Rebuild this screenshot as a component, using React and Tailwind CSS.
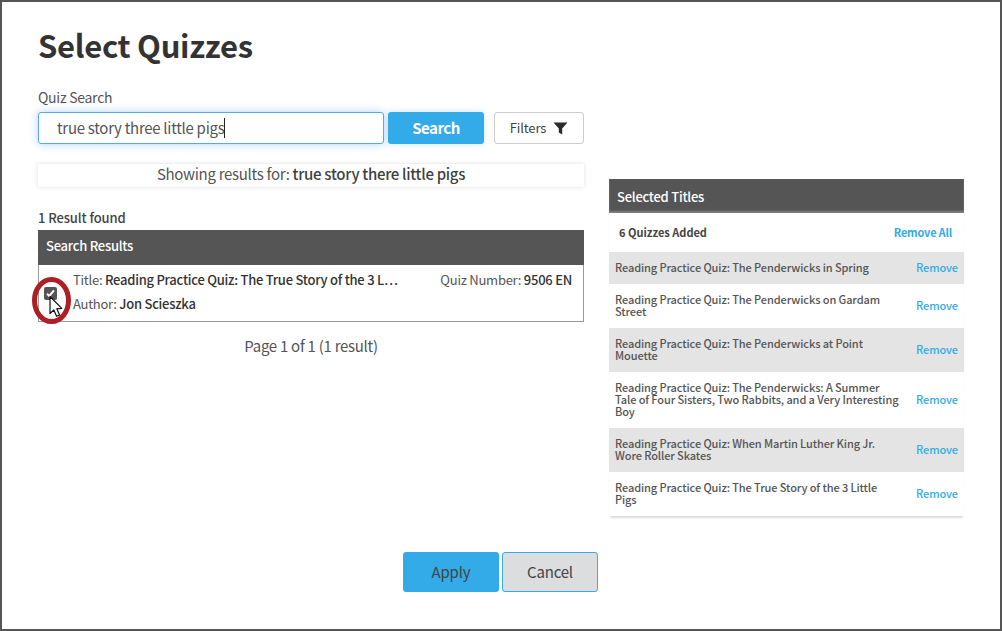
import React from "react";

const font = { fontFamily: '"Noto Sans CJK SC", "Noto Sans", sans-serif' };

const selected = [
  { title: "Reading Practice Quiz: The Penderwicks in Spring", h: "h-[32px]", shaded: true },
  { title: "Reading Practice Quiz: The Penderwicks on Gardam Street", h: "h-[44px]" },
  { title: "Reading Practice Quiz: The Penderwicks at Point Mouette", h: "h-[44px]", shaded: true },
  { title: "Reading Practice Quiz: The Penderwicks: A Summer Tale of Four Sisters, Two Rabbits, and a Very Interesting Boy", h: "h-[56px]" },
  { title: "Reading Practice Quiz: When Martin Luther King Jr. Wore Roller Skates", h: "h-[44px]", shaded: true },
  { title: "Reading Practice Quiz: The True Story of the 3 Little Pigs", h: "h-[44px]" },
];

const FilterIcon = () => (
  <svg width="15" height="13" viewBox="0 0 15 13" className="ml-[7px]">
    <path d="M0.5 0.5H14.5L9.2 6.4V12.5L5.8 10.4V6.4Z" fill="#2b2b2b" />
  </svg>
);

const CheckMark = () => (
  <svg width="13" height="13" viewBox="0 0 13 13">
    <path d="M3 6.8L5.3 9L10 3.4" fill="none" stroke="#fff" strokeWidth="2" />
  </svg>
);

const Annotation = () => (
  <svg width="46" height="54" viewBox="0 0 46 54" className="absolute left-[-10px] top-[44px]">
    <ellipse cx="23.5" cy="26.5" rx="17" ry="21" fill="none" stroke="#ad1f25" strokeWidth="5" />
    <path
      d="M22 22.5V39.5L25.8 36L28.6 42.3L31.6 41L28.8 34.8L33.8 34.4Z"
      fill="#fff"
      stroke="#111"
      strokeWidth="1.2"
      strokeLinejoin="round"
    />
  </svg>
);

export default function App() {
  return (
    <div style={font} className="w-[1002px] h-[631px] border-2 border-[#555555] bg-white text-[#3f3f3f] pl-[36px] overflow-hidden">
      <h1 className="text-[31px] leading-[40px] tracking-[-0.3px] font-bold text-[#333333] mt-[23px]">Select Quizzes</h1>

      <div className="flex h-[461px] mt-[23px]">
        <div className="w-[546px]">
          <label className="block text-[14px] tracking-[-0.27px] leading-[18px] text-[#555555]">Quiz Search</label>
          <div className="flex mt-[6px] h-[32px]">
            <div className="w-[346px] border border-[#5aa9e6] rounded-[3px] shadow-[0_0_8px_rgba(70,160,235,0.45)] pl-[18px] flex items-center text-[15px] tracking-[-0.29px] text-[#555555]">
              <span>true story three little pigs</span>
              <span className="w-px h-[20px] bg-[#222222]" />
            </div>
            <button className="ml-[4px] w-[96px] bg-[#33abe8] rounded-[3px] text-white text-[15px] tracking-[-0.5px] font-bold shadow-[0_0_6px_rgba(70,160,235,0.3)]">Search</button>
            <button className="ml-[10px] w-[90px] border border-[#cccccc] rounded-[3px] flex items-center justify-center text-[13px] tracking-[-0.15px] text-[#444444]">
              Filters
              <FilterIcon />
            </button>
          </div>

          <div className="mt-[20px] h-[23px] pb-[3px] flex items-center justify-center text-[15px] tracking-[-0.3px] text-[#555555] shadow-[0_0_4px_rgba(0,0,0,0.14)]">
            <span>Showing results for: <b className="font-medium text-[#3f3f3f]">true story there little pigs</b></span>
          </div>

          <div className="mt-[22px] text-[13px] tracking-[-0.1px] leading-[17px] font-medium text-[#444444]">1 Result found</div>

          <div className="relative mt-[4px]">
            <div className="h-[35px] pb-[4px] bg-[#555555] text-white text-[13px] tracking-[-0.25px] font-medium flex items-center pl-[8px]">Search Results</div>
            <div className="h-[57px] border-x border-b border-[#999999] flex items-start text-[13px] tracking-[-0.25px]">
              <span className="w-[13px] h-[13px] bg-[#555555] rounded-[2px] ml-[5px] mt-[22px] flex-none">
                <CheckMark />
              </span>
              <div className="ml-[16px] mt-[6px] flex-1">
                <div className="flex justify-between whitespace-nowrap leading-[18px] pr-[11px]">
                  <span className="text-[#555555]">Title: <b className="font-medium text-[#333333]">Reading Practice Quiz: The True Story of the 3 L…</b></span>
                  <span className="text-[#555555]">Quiz Number: <b className="font-medium text-[#333333]">9506 EN</b></span>
                </div>
                <div className="leading-[18px] mt-[6px] text-[#555555]">Author: <b className="font-medium text-[#333333]">Jon Scieszka</b></div>
              </div>
            </div>
            <Annotation />
          </div>

          <div className="mt-[14px] text-center text-[15px] tracking-[-0.28px] leading-[20px] text-[#555555]">Page 1 of 1 (1 result)</div>
        </div>

        <div className="w-[355px] ml-[25px] mt-[91px] self-start shadow-[0_3px_2px_-1px_rgba(0,0,0,0.14)]">
          <div className="h-[34px] pt-[2px] bg-[#555555] shadow-[inset_0_-2px_2px_rgba(255,255,255,0.25)] text-white text-[13px] tracking-[-0.25px] font-medium flex items-center pl-[8px]">Selected Titles</div>
          <div className="h-[39px] flex items-center justify-between pl-[10px] pr-[12px] text-[11px] font-bold">
            <span className="text-[#444444]">6 Quizzes Added</span>
            <span className="text-[#33abe8] tracking-[-0.2px]">Remove All</span>
          </div>
          {selected.map((q) => (
            <div key={q.title} className={`${q.h} ${q.shaded ? "bg-[#e4e4e4]" : ""} flex items-center pl-[6px] pr-[6px] pb-[3px] text-[11px] tracking-[-0.1px] leading-[12px]`}>
              <span className="w-[286px] text-[#555555] font-medium">{q.title}</span>
              <span className="ml-auto text-[#33abe8] font-medium">Remove</span>
            </div>
          ))}
        </div>
      </div>

      <div className="flex ml-[365px] mt-[3px] h-[40px] text-[15px] tracking-[-0.2px]">
        <button className="w-[96px] bg-[#33abe8] rounded-[3px] text-[#444444]">Apply</button>
        <button className="w-[96px] ml-[3px] bg-[#dcddde] border border-[#33abe8] rounded-[3px] text-[#444444]">Cancel</button>
      </div>
    </div>
  );
}
